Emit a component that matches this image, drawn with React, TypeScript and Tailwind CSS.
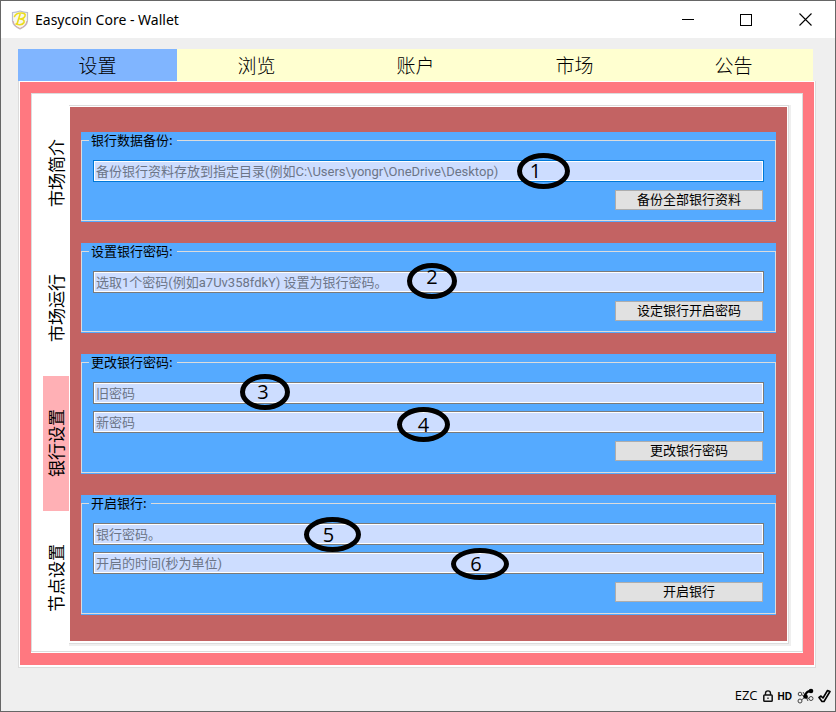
import React from "react";

type Mark = { digit: string; ring: string; text: string };
type Field = { id: string; hint: string; focused?: boolean; mark: Mark };
type Group = { title: string; fields: Field[]; action: string };

const mainTabs = ["设置", "浏览", "账户", "市场", "公告"];
const sideTabs = ["市场简介", "市场运行", "银行设置", "节点设置"];

const groups: Group[] = [
  {
    title: "银行数据备份:",
    action: "备份全部银行资料",
    fields: [
      {
        id: "backup-path",
        hint: "备份银行资料存放到指定目录(例如C:\\Users\\yongr\\OneDrive\\Desktop)",
        focused: true,
        mark: { digit: "1", ring: "left-[424px] -top-[7px] w-[53px] h-9", text: "pr-4" },
      },
    ],
  },
  {
    title: "设置银行密码:",
    action: "设定银行开启密码",
    fields: [
      {
        id: "set-password",
        hint: "选取1个密码(例如a7Uv358fdkY) 设置为银行密码。",
        mark: { digit: "2", ring: "left-[314px] -top-2 w-[50px] h-9", text: "pb-2" },
      },
    ],
  },
  {
    title: "更改银行密码:",
    action: "更改银行密码",
    fields: [
      {
        id: "old-password",
        hint: "旧密码",
        mark: { digit: "3", ring: "left-[147px] -top-2 w-[50px] h-9", text: "pr-1" },
      },
      {
        id: "new-password",
        hint: "新密码",
        mark: { digit: "4", ring: "left-[304px] -top-1 w-[53px] h-[35px]", text: "" },
      },
    ],
  },
  {
    title: "开启银行:",
    action: "开启银行",
    fields: [
      {
        id: "unlock-password",
        hint: "银行密码。",
        mark: { digit: "5", ring: "left-[211px] -top-1.5 w-[57px] h-[35px]", text: "pr-2" },
      },
      {
        id: "unlock-seconds",
        hint: "开启的时间(秒为单位)",
        mark: { digit: "6", ring: "left-[358px] -top-1 w-[58px] h-8", text: "pr-2" },
      },
    ],
  },
];

function TextField({ field }: { field: Field }) {
  return (
    <div className="relative">
      <input
        id={field.id}
        aria-label={field.hint}
        placeholder={field.hint}
        className={`block h-[22px] w-full border bg-[#cdddff] px-0.5 font-[Roboto,'Noto_Sans_CJK_SC',sans-serif] text-[13px] leading-4 text-black outline-1 -outline-offset-2 outline-white placeholder:text-[#6c7587] placeholder:opacity-100 ${
          field.focused ? "border-[#0078d7]" : "border-[#7a7a7a]"
        }`}
      />
      <span
        className={`pointer-events-none absolute flex items-center justify-center rounded-[50%] border-[5px] border-black font-['Open_Sans'] text-xl leading-5 text-black ${field.mark.ring} ${field.mark.text}`}
      >
        {field.mark.digit}
      </span>
    </div>
  );
}

function GroupBox({ group }: { group: Group }) {
  return (
    <div className="bg-[#55aaff] pb-px">
      <fieldset
        className={`flex flex-col border border-[#dcdcdc] px-[11px] ${group.fields.length > 1 ? "pb-[11px]" : "pb-2.5"}`}
      >
        <legend className="-ml-1 h-[17px] bg-[#55aaff] pr-1 pl-0.5 text-[13px] leading-[15px] text-black">
          {group.title}
        </legend>
        <div className="flex flex-col gap-[7px] pt-[11px]">
          {group.fields.map((f) => (
            <TextField key={f.id} field={f} />
          ))}
        </div>
        <button
          type="button"
          className="mt-2 mr-px h-5 w-[148px] self-end border border-[#adadad] bg-[#e1e1e1] pb-0.5 text-[13px] leading-4 text-black"
        >
          {group.action}
        </button>
      </fieldset>
    </div>
  );
}

function Logo() {
  return (
    <svg viewBox="0 0 18 20" className="h-5 w-[18px]" aria-hidden="true">
      <path d="M1.5 2.5Q5 2.5 9 1Q13 2.5 16.5 2.5V11Q16 16 9 19Q2 16 1.5 11Z" fill="#f7f7ee" stroke="#b9bdd0" strokeWidth="1.2" />
      <path d="M2 11Q3 16 9 18.5Q15 16 16 11" fill="none" stroke="#d9a7a0" strokeWidth="1" />
      <path d="M3.500 6.500Q5 3 10 3Q15 3 14 6Q13 9 8.500 9Q14 9 13 12.500Q11 16 5 14M9 4.500L6 14" fill="none" stroke="#ecdc1e" strokeWidth="1.600" strokeLinecap="round" />
    </svg>
  );
}

function TitleBar() {
  return (
    <header className="flex h-[37px] items-center bg-white">
      <div className="flex flex-1 items-center gap-1.5 pl-2.5">
        <Logo />
        <h1 className="font-['Noto_Sans'] text-sm text-black">Easycoin Core - Wallet</h1>
      </div>
      <button type="button" aria-label="最小化" className="flex h-full w-[58px] items-center justify-center">
        <svg width="12" height="12" shapeRendering="crispEdges"><path d="M0 5.500H12" stroke="#000" /></svg>
      </button>
      <button type="button" aria-label="最大化" className="flex h-full w-[58px] items-center justify-center">
        <svg width="12" height="12" shapeRendering="crispEdges"><rect x=".5" y=".5" width="11" height="11" fill="none" stroke="#000" /></svg>
      </button>
      <button type="button" aria-label="关闭" className="flex h-full w-[60px] items-center justify-center">
        <svg width="13" height="13"><path d="M.5 .5L12.500 12.500M12.500 .5L.5 12.500" stroke="#000" strokeWidth="1.1" /></svg>
      </button>
    </header>
  );
}

function StatusBar() {
  return (
    <footer className="mt-4 flex h-6 items-center justify-end gap-[5px] pr-1 text-black">
      <span className="font-['Open_Sans'] text-[13px]">EZC</span>
      <svg viewBox="0 0 10 12" className="h-3 w-2.5" aria-label="已加密">
        <rect x=".8" y="5" width="8.400" height="6.200" rx=".8" fill="none" stroke="#111" strokeWidth="1.500" />
        <path d="M2.500 5V3.200Q2.500 .9 5 .9T7.500 3.200V5" fill="none" stroke="#111" strokeWidth="1.400" />
        <path d="M5 7.500V9" stroke="#111" strokeWidth="1.200" />
      </svg>
      <span className="font-['Liberation_Sans'] text-[10px] font-bold">HD</span>
      <svg viewBox="0 0 18 16" className="-mr-0.5 h-4 w-[18px]" aria-label="网络连接">
        <g fill="none" stroke="#444" strokeWidth="1">
          <circle cx="3" cy="6" r="1.800" />
          <circle cx="3" cy="13" r="2" />
          <circle cx="14" cy="10.500" r="2" />
          <path d="M4.500 6.500L8 9L4.500 12M8 9L12 10.500M6 4L9 9M9 9L11 13" />
        </g>
        <circle cx="8.500" cy="8.500" r="2.300" fill="#000" />
        <path d="M8 8Q9 3 14 3.200" fill="none" stroke="#000" strokeWidth="2.200" />
        <circle cx="14" cy="3" r="2.300" fill="#000" />
      </svg>
      <svg viewBox="0 0 13 14" className="h-3.5 w-[13px]" aria-label="已同步">
        <path d="M1 8.500L3 7L5 9L9.500 1.500L12 2.500L6 12.500H4Z" fill="none" stroke="#000" strokeWidth="1.600" strokeLinejoin="round" />
      </svg>
    </footer>
  );
}

export default function App() {
  return (
    <div className="flex min-h-screen flex-col border border-[#666] bg-[#efefef] font-['Noto_Sans_CJK_SC',sans-serif]">
      <TitleBar />
      <main className="px-[17px] pt-[11px] pr-[19px]">
        <nav className="mr-[3px] grid grid-cols-5">
          {mainTabs.map((t, i) => (
            <button
              key={t}
              type="button"
              className={`h-8 text-[19px] leading-8 font-light text-black ${i === 0 ? "bg-[#80b5ff]" : "bg-[#ffffd0]"}`}
            >
              {t}
            </button>
          ))}
        </nav>
        <div className="border border-t-0 border-[#dcdcdc] bg-white px-px pt-px pb-0.5">
          <div className="bg-[#ff7880] p-[11px] pb-[13px]">
            <div className="flex border border-[#dcdcdc] bg-white pt-[11px] pr-[11px] pb-[5px] pl-[11px] shadow-[0_1px_white]">
              <nav className="flex w-[26px] flex-none flex-col">
                {sideTabs.map((t, i) => (
                  <button
                    key={t}
                    type="button"
                    className={`flex flex-1 items-center justify-center text-[17px] text-black ${i === 2 ? "bg-[#ffb0b5]" : ""}`}
                  >
                    <span className="rotate-180 leading-[26px] [text-orientation:sideways] [writing-mode:vertical-rl]">
                      {t}
                    </span>
                  </button>
                ))}
              </nav>
              <div className="min-w-0 flex-1 border-r-2 border-b-2 border-[#efefef]">
                <div className="border-t border-r border-b border-[#dcdcdc] bg-white pt-px pr-px pb-0.5 pl-px">
                  <div className="flex flex-col gap-[21px] bg-[#c36363] px-[11px] pt-[25px] pb-[26px]">
                    {groups.map((g) => (
                      <GroupBox key={g.title} group={g} />
                    ))}
                  </div>
                </div>
              </div>
            </div>
          </div>
        </div>
      </main>
      <StatusBar />
    </div>
  );
}
